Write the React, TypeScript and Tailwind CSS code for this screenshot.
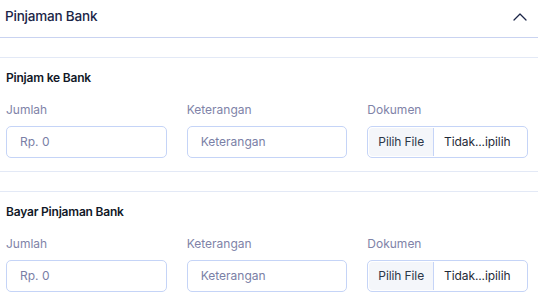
import React from 'react'
import { ChevronUp } from 'lucide-react'

const fields = [
  { label: 'Jumlah', placeholder: 'Rp. 0' },
  { label: 'Keterangan', placeholder: 'Keterangan' },
]

const Section = ({ title }: { title: string }) => (
  <div className="border-y border-[#e3e9f6] pt-[12px] pb-[13px] pl-[6px] pr-[10px]">
    <h4 className="text-[12px] leading-4 font-semibold text-[#111827] tracking-[-0.2px]">{title}</h4>
    <div className="mt-4 grid grid-cols-3 gap-x-5">
      {fields.map((f) => (
        <div key={f.label}>
          <label className="block text-[12px] leading-4 text-[#8083a8]">{f.label}</label>
          <div className="mt-2 h-[32px] rounded-[5px] border border-[#c5d4f7] bg-white px-[13px] flex items-center text-[12px] text-[#7a80a6]">
            {f.placeholder}
          </div>
        </div>
      ))}
      <div>
        <label className="block text-[12px] leading-4 text-[#8083a8]">Dokumen</label>
        <div className="mt-2 h-[32px] rounded-[5px] border border-[#c5d4f7] bg-white flex items-stretch p-[1px] text-[12px] tracking-[-0.1px]">
          <div className="flex items-center rounded-l-[4px] bg-[#f4f6fa] border-r border-[#c5d4f7] px-[9px] text-[#2d3748]">
            Pilih File
          </div>
          <div className="flex items-center pl-[10px] text-[#1f2937]">Tidak...ipilih</div>
        </div>
      </div>
    </div>
  </div>
)

export default function App() {
  return (
    <div className="w-[538px] h-[296px] overflow-hidden bg-white" style={{ fontFamily: 'Inter, "Noto Sans", sans-serif' }}>
      <div className="h-[38px] border-b border-[#c9d3f1] flex items-center justify-between pl-[5px] pr-[12px] pb-[4px]">
        <span className="text-[13.5px] font-medium text-[#1b2547] tracking-[-0.2px]">Pinjaman Bank</span>
        <ChevronUp size={24} strokeWidth={1.25} className="text-[#1b2547] -mr-[6px]" />
      </div>
      <div className="h-[19px]" />
      <Section title="Pinjam ke Bank" />
      <div className="h-[19px]" />
      <Section title="Bayar Pinjaman Bank" />
    </div>
  )
}
